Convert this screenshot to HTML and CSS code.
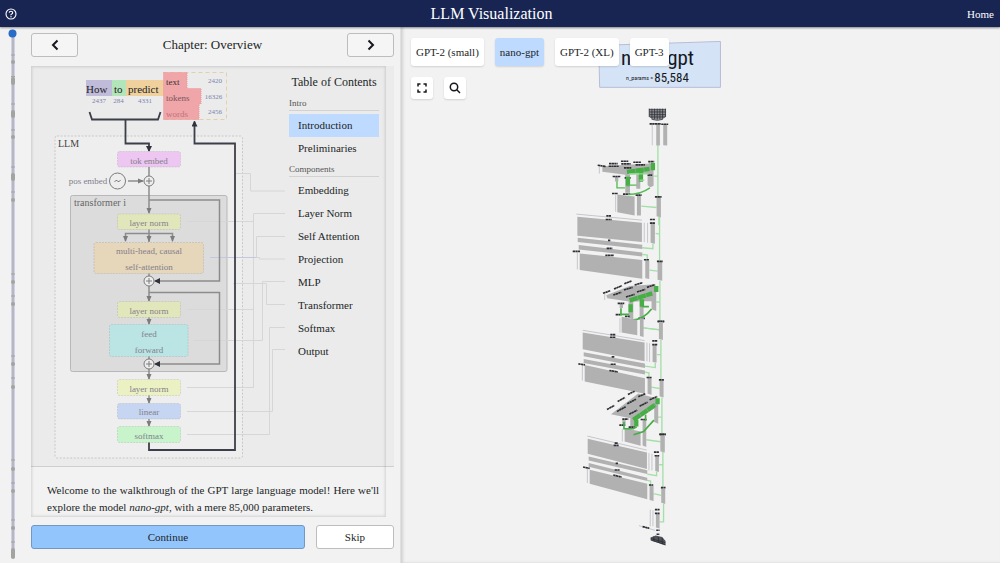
FILE: index.html
```html
<!DOCTYPE html>
<html lang="en">
<head>
<meta charset="utf-8">
<meta name="viewport" content="width=device-width, initial-scale=1">
<title>LLM Visualization</title>
<link rel="stylesheet" href="styles.css">
</head>
<body>
<header class="topbar">
  <button class="help" type="button" aria-label="Help">
    <svg viewBox="0 0 12 12" width="12" height="12"><circle cx="6" cy="6" r="5" fill="none" stroke="#fff" stroke-width="1.1"/><path d="M4.2 4.8Q4.3 3.3 6 3.3T7.7 4.7Q7.7 5.5 6.7 6T6 7.3" fill="none" stroke="#fff" stroke-width="1.1"/><circle cx="6" cy="8.8" r=".7" fill="#fff"/></svg>
  </button>
  <h1 class="title">LLM Visualization</h1>
  <a class="home" href="#">Home</a>
</header>
<main class="page">
  <section class="guide">
    <svg class="timeline" viewBox="0 0 31 536" preserveAspectRatio="xMidYMin meet" aria-hidden="true">
      <path d="M13 7V531" stroke="#d0d0e6" stroke-width="4"/>
      <path d="M13 7V531" stroke="#b7b7bf" stroke-width="2"/>
      <path class="ticks" d="M11 28h4M11 49.500h4M11 77h4M11 103h4M11 140h4M11 165h4M11 247h4M11 269h4M11 329h4M11 351h4M11 433h4M11 456h4M11 493h4M11 515h4"/>
      <g fill="#a3a3a1"><circle cx="13" cy="35" r="2"/><rect x="11" y="50" width="4" height="8" rx="2"/><rect x="11" y="83" width="4" height="8" rx="2"/><circle cx="13" cy="110" r="2"/><rect x="11" y="146" width="4" height="8" rx="2"/><circle cx="13" cy="173" r="2"/><circle cx="13" cy="255" r="2"/><circle cx="13" cy="277" r="2"/><circle cx="13" cy="337" r="2"/><circle cx="13" cy="360" r="2"/><circle cx="13" cy="442" r="2"/><circle cx="13" cy="464" r="2"/><circle cx="13" cy="501" r="2"/><rect x="11" y="521" width="4" height="11" rx="2"/></g>
      <circle cx="12.500" cy="6.500" r="4" fill="#2a6bc8"/>
    </svg>
    <div class="column">
      <div class="chapter">
        <button class="btn nav" type="button" aria-label="Previous chapter"><svg width="8" height="12" viewBox="0 0 8 12"><path d="M6.500 1.500L2 6l4.500 4.500"/></svg></button>
        <h2>Chapter: Overview</h2>
        <button class="btn nav" type="button" aria-label="Next chapter"><svg width="8" height="12" viewBox="0 0 8 12"><path d="M1.500 1.500L6 6l-4.500 4.500"/></svg></button>
      </div>
      <article class="lesson">
        <div class="overview">
          <svg class="diagram" viewBox="31 66 258 400" role="img" aria-label="LLM architecture">
            <defs>
              <marker id="g" viewBox="0 0 6 6" refX="5" refY="3" markerWidth="6" markerHeight="6" markerUnits="userSpaceOnUse" orient="auto"><path d="M0 .5L6 3L0 5.500z" fill="#7c7c7c"/></marker>
              <marker id="k" viewBox="0 0 6 6" refX="5" refY="3" markerWidth="6" markerHeight="6" markerUnits="userSpaceOnUse" orient="auto"><path d="M0 0L6 3L0 6z" fill="#30323c"/></marker>
            </defs>
            <rect x="55" y="136" width="187.500" height="322" rx="2" fill="#eee" stroke="#c8c8c8" stroke-dasharray="2 1.500"/>
            <rect x="70.500" y="195.500" width="156.500" height="176" rx="2" fill="#dcdcdc" stroke="#b8b8b8"/>
            <g class="links">
              <path d="M236 173.500H250.500V191H285"/><path d="M253.500 388V213.500H285M187 221.500H253.500M187 309.500H253.500M187 387.500H253.500"/>
              <path d="M256.500 257.500V236.500H285M256.500 257.500H259.500V259H285"/><path d="M210 257.500H256.500" stroke="#c3c7e0"/>
              <path d="M194 340.500H262.500V281.500H285M233 283.500H266.500V304.500H285M187 434.500H269.500V327.500H285M187 411.500H272.500V349.500H285"/>
            </g>
            <rect x="86" y="80" width="26" height="16" fill="#c0bbd9"/><rect x="112" y="80" width="14" height="16" fill="#b3e5ba"/><rect x="126" y="80" width="38" height="16" fill="#f0d19e"/>
            <path d="M163.500 72.500H226.500V119.500H163.500" fill="none" stroke="#e3d0a5" stroke-dasharray="4 3"/>
            <path d="M163.500 72.500H187V88.500H201V104H199V119.500H163.500z" fill="#f0a5a8" stroke="#ec989d" stroke-dasharray="1 1"/>
            <g class="word"><text x="86" y="93">How</text><text x="114" y="93">to</text><text x="128" y="93">predict</text></g>
            <g class="token"><text x="166" y="85" fill="#333">text</text><text x="166" y="101" fill="#76585e">tokens</text><text x="166" y="117" fill="#bd747b">words</text></g>
            <g class="ids"><text x="99" y="103">2437</text><text x="118.500" y="103">284</text><text x="145" y="103">4331</text><text x="215" y="83">2420</text><text x="213.500" y="99">16326</text><text x="215" y="114">2456</text></g>
            <g class="wire dark"><path d="M89.500 112L92 119.500H158L160.500 112"/><path d="M125.500 119.500V143.500H149V151" marker-end="url(#k)"/><path d="M149 442V450H235V143.500H194.500V121.500" marker-end="url(#k)"/></g>
            <g class="wire">
              <path d="M149 167V176M149 229V242M149 273V276M149 356V359"/>
              <path d="M128 181H143" marker-end="url(#g)"/><path d="M149 186V213" marker-end="url(#g)"/>
              <path d="M149 233.500H125.500V241" marker-end="url(#g)"/><path d="M149 233.500H172.500V241" marker-end="url(#g)"/><path d="M149 235V241" marker-end="url(#g)"/>
              <path d="M149 286V301" marker-end="url(#g)"/><path d="M149 317V324" marker-end="url(#g)"/><path d="M149 369V379" marker-end="url(#g)"/><path d="M149 395V403" marker-end="url(#g)"/><path d="M149 419V426" marker-end="url(#g)"/>
              <path d="M149 200H219.500V281H155" marker-end="url(#k)"/><path d="M149 292.500H219.500V364H155" marker-end="url(#k)"/>
            </g>
            <g class="node"><circle cx="149" cy="181" r="5"/><circle cx="149" cy="281" r="5"/><circle cx="149" cy="364" r="5"/><circle cx="117.500" cy="181" r="8"/><path d="M146 181h6M149 178v6M146 281h6M149 278v6M146 364h6M149 361v6M114.500 182q1.500-3 3-1t3-1"/></g>
            <g class="box">
              <rect x="117.500" y="151.500" width="63" height="15.500" rx="2" fill="#edc6f1"/>
              <rect x="117.500" y="214" width="63" height="15.500" rx="2" fill="#e2e7bb"/>
              <rect x="94" y="242.500" width="109.500" height="31" rx="2" fill="#e6d6ba"/>
              <rect x="117.500" y="301.500" width="63" height="16" rx="2" fill="#e2e7bb"/>
              <rect x="109.500" y="324.500" width="78.500" height="32" rx="2" fill="#bae5e4"/>
              <rect x="117.500" y="379.500" width="63" height="16" rx="2" fill="#ecf1c4"/>
              <rect x="117.500" y="403.500" width="63" height="15.500" rx="2" fill="#c6d5f2"/>
              <rect x="117.500" y="426.500" width="63" height="16" rx="2" fill="#c8f4cc"/>
            </g>
            <g class="label"><text x="149" y="164">tok embed</text><text x="149" y="226">layer norm</text><text x="149" y="254">multi-head, causal</text><text x="149" y="270">self-attention</text><text x="149" y="314">layer norm</text><text x="149" y="337">feed</text><text x="149" y="353">forward</text><text x="149" y="392">layer norm</text><text x="149" y="415">linear</text><text x="149" y="439">softmax</text><text x="88" y="183.500">pos embed</text></g>
            <g class="group"><text x="58" y="147" fill="#444">LLM</text><text x="74" y="206" fill="#666">transformer i</text></g>
          </svg>
          <nav class="toc" aria-label="Table of Contents">
            <h3>Table of Contents</h3>
            <h4>Intro</h4>
            <a class="current" href="#">Introduction</a><a href="#">Preliminaries</a>
            <h4>Components</h4>
            <a href="#">Embedding</a><a href="#">Layer Norm</a><a href="#">Self Attention</a><a href="#">Projection</a><a href="#">MLP</a><a href="#">Transformer</a><a href="#">Softmax</a><a href="#">Output</a>
          </nav>
        </div>
        <p>Welcome to the walkthrough of the GPT large language model! Here we'll explore the model <em>nano-gpt</em>, with a mere 85,000 parameters.</p>
      </article>
      <div class="actions">
        <button class="btn continue" type="button">Continue</button>
        <button class="btn skip" type="button">Skip</button>
      </div>
    </div>
  </section>
  <section class="viewer">
    <svg class="scene" viewBox="400 27 600 536" preserveAspectRatio="xMidYMid meet" role="img" aria-label="3D model of nano-gpt">
      <path d="M598 45L720 41V87L599 87z" fill="#d4e3f5" stroke="#b9bdd9"/>
      <g class="plate"><text x="657" y="65" font-size="21">nano-gpt</text><text x="671" y="82" font-size="13">85,584</text><text x="639" y="80" font-size="6">n_params =</text></g>
      <!-- embedding and first attention layer -->
      <svg class="part" x="559" y="95" width="130" height="130" viewBox="0 0 390 390">
        <path class="flow" d="M295 150V305M283 243H295M245 333L291 337M298 366V390"/>
        <path d="M268 42h51v22l-12 9h-26l-13-9z" fill="#888b90"/>
        <path d="M268 42h51M270 50h48M270 58h48M271 65h46M276 72q18 7 34 0M269 40v25M277 40v30M285 40v32M293 40v34M301 40v32M309 40v30M318 40v25" class="ink"/>
        <path class="slab" d="M290 87h11v64h-11zM311 87h12v64l-12-1zM128 213l142-8v30l-72 4-70-9zM166 245h10v14h-10zM197 236h14v57h-14zM230 238h12v43h-12zM268 202l14 8v62l-10 4-8-6v-34zM173 298l52 6v57l-52-10zM232 299h12v62h-12zM291 304h13v63l-13-4z"/>
        <path class="thin" d="M278 85V150M119 215V235M168 300V350"/>
        <path class="caps" d="M270 86h24M286 86h18M305 87h21M114 210l25 4M148 205h26M184 198h22M221 201h24M266 199h18M147 213h30M185 206h28M228 209h28M193 218h22M159 244h24M195 248h18M157 295h18M190 297h22M228 300h18M286 305h20M264 240h14"/>
        <path d="M202 230l68-9M280 203v22M205 245v28M244 230v30" class="heads"/>
        <path d="M172 258v20h24M206 270h25M205 298q38 0 66-20" stroke="#55b955" stroke-width="4" fill="none"/>
        <path d="M208 236h60M240 255h14" stroke="#8cdd8c" stroke-width="4"/>
      </svg>
      <!-- first MLP and second attention layer -->
      <svg class="part" x="559" y="200" width="130" height="130" viewBox="0 0 390 390">
        <path class="flow" d="M300 50V182M301 242V365M288 100l12 2M248 143l32 3V130M248 163l15 2V180M270 210l24 3M290 306h10M250 384l48 5"/>
        <path class="slab" d="M53 50l194 18v58L53 107zM54 113l194 21v13L54 126zM57 135l191 22v12L57 148zM60 160l188 20v56L60 210zM273 65l13 2v64l-13-3zM257 180l12 2v55l-12-2zM294 182l14 3v57l-14-3zM140 286l70-28 78-5-8 50-67 2-70-10zM180 310h10v14h-10zM207 300h14v58l-14-4zM240 290h12v65h-12zM276 275h14v58l-14-5z"/>
        <path class="thin" d="M50 42l197 18M53 157V208M254 68V126M264 68V128M135 280V300"/>
        <path class="caps" d="M140 47h14M138 58h18M145 121h8M141 145h17M137 166h26M39 154h22M271 58h16M271 69h16M253 179h16M292 184h18M130 280l22-8M163 267l24-10M194 251l22-8M161 285l24-8M193 270l26-8M225 255l24-7M199 291l26-8M232 276l25-8M262 262l24-8M174 310h20M168 344h18M196 349h14M236 355h20M294 365h20"/>
        <path d="M210 301l68-21M290 258v18M213 313v24M247 298v22" class="heads"/>
        <path d="M184 325v18h24M216 360q35 0 60-33M248 320h20" stroke="#45ae45" stroke-width="5" fill="none"/>
      </svg>
      <!-- second MLP and third attention layer -->
      <svg class="part" x="559" y="320" width="130" height="130" viewBox="0 0 390 390">
        <path class="flow" d="M304 60V180M307 233V345M252 24l47 6M292 104h12M256 139l31 4V128M256 157l12 2V173M275 202l25 4M292 292h14M260 360l43 6"/>
        <path class="slab" d="M186-10l47 10v46l-47-8zM241-5h11v56l-11-3zM298 3h12v57l-12-3zM69 38l186 30v56L69 88zM72 97l184 34v13L72 109zM72 117l184 35v12L72 129zM75 135l181 40v47L75 185zM279 72l12 3v53l-12-2zM264 173l12 2v50l-12-3zM300 180l12 3v50l-12-4zM154 283l82-62 60 16-8 26-54 37zM188 300h10v14h-10zM212 290h12v32h-12zM284 250h12v62l-12-5zM195 325l48 10v43l-48-13zM249 300h11v82l-11-5zM303 345l12 4v50l-12-4z"/>
        <path class="thin" d="M69 31l186 31M68 135V182M262 68V124M270 70V126M181-5V38M188 328V365"/>
        <path class="caps" d="M152 44h15M151 52h17M156 111h9M153 133h16M149 152l26 4M56 132l20 3M278 63h16M278 74h15M261 173h15M298 180h16M294 4h20M142 269l22-12M174 245l22-12M205 224l20-10M172 275l26-14M203 252l26-14M236 231l22-10M209 283l24-12M240 259l24-12M270 240l23-10M188 298h18M179 316h18M207 322h20M243 299h18M299 344h20"/>
        <path d="M221 300l66-45M294 235v18M230 300v20" class="heads"/>
        <path d="M193 307v20h28l10-6M222 345l30-10 31-34M258 285v18" stroke="#45ae45" stroke-width="5" fill="none"/>
      </svg>
      <!-- last MLP and output -->
      <svg class="part" x="559" y="430" width="130" height="130" viewBox="0 0 390 390">
        <path class="flow" d="M310 65V176M312 222V277H300M299 105h11M263 133l28 5V126M263 152l10 2V165M282 192l23 5"/>
        <path class="slab" d="M84 27l178 41v50L84 72zM87 80l176 42v11L87 92zM87 100l176 44v10L87 111zM90 120l173 42v47L90 162zM287 76l11 3v48l-11-3zM270 165l12 3v46l-12-3zM305 175l12 4v44l-12-4zM303 15l12 3v48l-12-4zM289 250l11 3v44l-11-3z"/>
        <path class="thin" d="M83 19l178 42M83 114V160M268 70V122M277 72V122M272 240V290M280 242V290M238 288l48 14"/>
        <path class="caps" d="M165 40h10M162 47h15M168 101h8M165 121h15M161 136l25 6M70 112l20 4M283 67h16M285 78h14M268 166h13M304 174h14M300 14h18M286 240h14M286 251h14M249 291l20 5M290 302h10M291 314h9"/>
        <path d="M273 324l15-6 20 4 10 12v14l-45-16z" fill="#50545b"/><path class="ink" d="M274 327l43 12M275 332l42 13M282 321l2 14M296 322l2 17M308 325v19"/>
      </svg>
    </svg>
    <div class="controls">
      <div class="models">
        <button class="chip" type="button">GPT-2 (small)</button><button class="chip active" type="button">nano-gpt</button><button class="chip" type="button">GPT-2 (XL)</button><button class="chip" type="button">GPT-3</button>
      </div>
      <div class="tools">
        <button class="tool" type="button" aria-label="Fit to view"><svg width="10" height="10" viewBox="0 0 10 10"><path d="M1 3.500V1h2.500M6.500 1H9v2.500M9 6.500V9H6.500M3.500 9H1V6.500"/></svg></button>
        <button class="tool" type="button" aria-label="Zoom"><svg width="12" height="12" viewBox="0 0 12 12"><circle cx="5" cy="5" r="3.700"/><path d="M7.800 7.800L11 11"/></svg></button>
      </div>
    </div>
  </section>
</main>
</body>
</html>
```

FILE: styles.css
```css
* { box-sizing: border-box; }
body {
  margin: 0;
  min-height: 100vh;
  display: flex;
  flex-direction: column;
  background: #f2f2f2;
  color: #1c1f26;
  font: 11px/16px "Liberation Serif", "Times New Roman", serif;
}
button { font: inherit; color: inherit; cursor: pointer; }
a { color: inherit; text-decoration: none; }
h1, h2, h3, h4, p { margin: 0; font-weight: 400; }

.topbar {
  display: grid;
  grid-template-columns: 1fr auto 1fr;
  align-items: center;
  height: 27px;
  padding: 0 6px 0 5px;
  background: #182553;
  color: #fff;
  box-shadow: 0 1px 2px #0006;
  z-index: 1;
}
.help { justify-self: start; display: flex; padding: 0; border: 0; background: none; }
.title { font-size: 16px; line-height: 20px; padding: 1px 16px 0 0; }
.home { justify-self: end; }

.page { flex: 1; display: grid; grid-template-columns: 2fr 3fr; }
.guide { display: grid; grid-template-columns: 31px 1fr; align-items: start; }
.timeline { width: 100%; }
.ticks { stroke: #a3a3a1; stroke-width: 1; }
.column { padding: 6px 6px 13px 0; }

.btn {
  display: flex;
  align-items: center;
  justify-content: center;
  height: 24px;
  padding: 0;
  border: 1px solid #bdbdbd;
  border-radius: 3px;
}
.chapter { display: flex; align-items: center; justify-content: space-between; margin-bottom: 9px; }
.chapter h2 { font-size: 13px; }
.nav { width: 47px; background: #f5f5f5; }
.nav path { fill: none; stroke: #16181e; stroke-width: 2; }

.lesson { position: relative; margin-bottom: 8px; }
.lesson::after {
  content: "";
  position: absolute;
  inset: 0 8px 0 0;
  box-shadow: inset 0 0 3px 1px #0002;
  pointer-events: none;
}
.lesson p { padding: 15px 15px 1px 16px; line-height: 17px; text-align: justify; }
.overview {
  display: grid;
  grid-template-columns: 258fr 105fr;
  align-items: start;
  background: #ebebeb;
  border-bottom: 1px solid #cfcfcf;
}
.diagram { width: 100%; display: block; }
.toc { padding: 8px 15px 0 0; }
.toc h3 { font-size: 12px; text-align: center; }
.toc h4 {
  margin: 6px 0 3px;
  font-size: 9px;
  line-height: 14px;
  color: #555;
  border-bottom: 1px solid #d2d2d2;
}
.toc a { display: block; padding-left: 9px; line-height: 23px; }
.toc .current { background: #bfdaff; }
.toc a + h4 { margin: 2px 0; }

.links path { fill: none; stroke: #d6d6d6; stroke-width: 1; }
.links path[stroke] { stroke: #c3c7e0; }
.wire path { fill: none; stroke: #8c8c8c; stroke-width: 1.5; }
.dark path { stroke: #3c3f49; stroke-width: 1.8; }
.node circle { fill: #eee; stroke: #7c7c7c; }
.node path { fill: none; stroke: #7c7c7c; stroke-width: 1; }
.box rect { stroke: #7773; stroke-width: 1; stroke-dasharray: 2 1; }
.word { font-size: 11px; fill: #222; }
.token { font-size: 9px; }
.ids { font-size: 7px; fill: #7b83ad; text-anchor: middle; }
.label { font-size: 9px; fill: #82808b; text-anchor: middle; }
.group { font-size: 10px; }

.actions { display: grid; grid-template-columns: 7fr 2fr; gap: 11px; }
.continue { background: #93c5fd; border-color: #7397c0; }
.skip { background: #fff; }

.viewer { position: relative; overflow: hidden; box-shadow: inset 2px 0 3px #0002; border-left: 1px solid #e0e0e0; }
.scene { position: absolute; inset: 0; width: 100%; height: 100%; }
.controls { position: relative; display: grid; gap: 11px; padding: 11px 10px; }
.models, .tools { display: flex; gap: 11px; }
.chip, .tool { border: 0; border-radius: 3px; background: #fff; box-shadow: 0 1px 2px #0002; }
.chip { height: 28px; padding: 0 5px; }
.chip.active { background: #bfdaff; }
.tool { display: flex; align-items: center; justify-content: center; width: 22px; height: 22px; padding: 0; }
.tool path, .tool circle { fill: none; stroke: #16181e; stroke-width: 1.5; }

.plate { font-family: "Roboto Condensed", "Liberation Sans Narrow", Roboto, sans-serif; fill: #16181e; text-anchor: middle; }
.part { overflow: visible; }
.slab { fill: #b1b1b1; }
.flow { fill: none; stroke: #a4dfa8; stroke-width: 4; }
.thin { fill: none; stroke: #c6c6ce; stroke-width: 3; }
.caps { fill: none; stroke: #2d2f34; stroke-width: 5; stroke-dasharray: 7 1; }
.heads { fill: none; stroke: #45ae45; stroke-width: 13; stroke-dasharray: 25 1; }
.ink { fill: none; stroke: #24262b; stroke-width: 2; }
```
